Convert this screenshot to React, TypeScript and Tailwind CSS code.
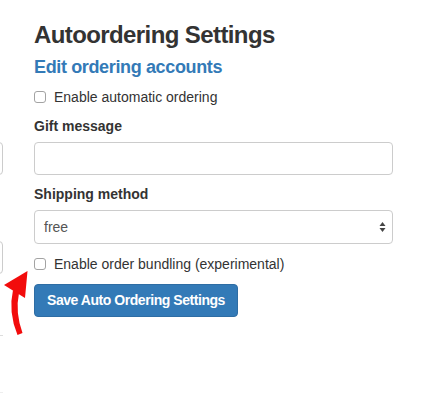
import React from 'react'

const font = { fontFamily: '"Liberation Sans", Arial, sans-serif' }

const Checkbox: React.FC = () => (
  <span className="inline-block w-[12px] h-[12px] rounded-[3px] border border-[#a3a3a3] bg-white shrink-0" />
)

const App: React.FC = () => {
  return (
    <div className="relative w-[423px] h-[396px] bg-white overflow-hidden text-[#333]" style={font}>
      <div className="flex">
        {/* clipped neighbour column */}
        <div className="w-[4px] shrink-0 overflow-hidden">
          <div className="w-[40px] -ml-[37px] flex flex-col">
            <div className="mt-[142px] h-[33px] border border-[#ccc] rounded-[4px]" />
            <div className="mt-[66px] h-[33px] border border-[#ccc] rounded-[4px]" />
            <div className="mt-[61px] h-px bg-[#ddd]" />
            <div className="mt-[56px] h-px bg-[#eee]" />
          </div>
        </div>

        <div className="ml-[30px] w-[359px] flex flex-col pt-[22px]">
          <h3 className="text-[24px] leading-[26px] font-bold tracking-[-0.6px]">Autoordering Settings</h3>
          <a className="mt-[9px] text-[18px] leading-[20px] font-bold tracking-[-0.36px] text-[#337ab7]">Edit ordering accounts</a>

          <label className="mt-[10px] flex items-center gap-[8px] text-[14px] leading-[20px]">
            <Checkbox />
            <span>Enable automatic ordering</span>
          </label>

          <div className="mt-[9px] text-[14px] leading-[20px] font-bold">Gift message</div>
          <div className="mt-[6px] h-[33px] border border-[#ccc] rounded-[4px] bg-white" />

          <div className="mt-[9px] text-[14px] leading-[20px] font-bold">Shipping method</div>
          <div className="mt-[6px] h-[34px] border border-[#ccc] rounded-[4px] bg-white flex items-center justify-between pl-[9px] pr-[6px]">
            <span className="text-[14px] text-[#555]">free</span>
            <svg width="7" height="12" viewBox="0 0 7 12">
              <path d="M3.5 1 L6.5 5 L0.5 5 Z" fill="#444" />
              <path d="M3.5 11 L6.5 7 L0.5 7 Z" fill="#444" />
            </svg>
          </div>

          <label className="mt-[10px] flex items-center gap-[8px] text-[14px] leading-[20px]">
            <Checkbox />
            <span>Enable order bundling (experimental)</span>
          </label>

          <div className="mt-[10px]">
            <button className="h-[33px] px-[12px] rounded-[4px] bg-[#337ab7] border border-[#2e6da4] text-white text-[14px] font-bold tracking-[-0.45px]">
              Save Auto Ordering Settings
            </button>
          </div>
        </div>
      </div>

      {/* annotation arrow */}
      <svg className="absolute left-0 top-0 pointer-events-none" width="40" height="345" viewBox="0 0 40 345">
        <polygon points="27.5,271 4,285 25,298" fill="#f20c0c" />
        <path d="M13,290 Q8,312 17.5,335 L22.5,333 Q15,312 19,293 Z" fill="#f20c0c" />
      </svg>
    </div>
  )
}

export default App
